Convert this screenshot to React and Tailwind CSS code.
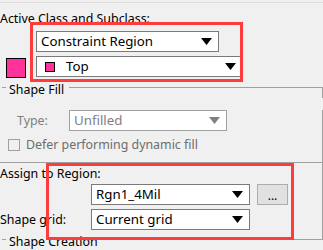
import React from "react";

// --- Combo arrow ---
const Arrow = ({ disabled }) => (
  <svg width="11" height="7" viewBox="0 0 11 7" className="shrink-0">
    <polygon points="0,0 11,0 5.5,7" fill={disabled ? "#808080" : "#000"} />
  </svg>
);

// --- Combo box ---
const Combo = ({ width, children, disabled, pr = "pr-[6px]" }) => (
  <div
    className={`flex h-[21px] shrink-0 items-center justify-between border bg-white pl-[4px] ${pr} ${
      disabled ? "border-[#a0a0a0] text-[#808080]" : "border-[#7a7a7a] text-black"
    }`}
    style={{ width }}
  >
    <div className="flex items-center text-[13.3px] leading-[19px]">{children}</div>
    <Arrow disabled={disabled} />
  </div>
);

// --- Group header (line with caption) ---
const GroupHeader = ({ title, corner }) => (
  <div className="flex h-[16px] items-start">
    <div className="ml-[2px] mt-[5px] h-px w-[4px] bg-[#a0a0a0]" />
    <span className="ml-[3px] mr-[5px] leading-[16px]">{title}</span>
    <div
      className={`mt-[5px] flex-1 border-t border-[#a0a0a0] ${
        corner ? "h-[11px] border-r" : ""
      }`}
    />
  </div>
);

const App = () => {
  return (
    <div className="relative h-[250px] w-[323px] overflow-hidden bg-[#f0f0f0] font-['Noto_Sans',sans-serif] text-[12.4px] text-black">
      <div className="mt-[2px] h-px bg-[#dcdcdc]" />

      {/* Active class */}
      <div className="mt-[8px] h-[16px] leading-[16px]">Active Class and Subclass:</div>
      <div className="mt-[4px] flex">
        <div className="ml-[6px] mt-[27px] h-[20px] w-[20px] border border-black bg-[#ff3399]" />
        <div className="ml-[10px] flex flex-col gap-[4px]">
          <Combo width={183}>Constraint Region</Combo>
          <Combo width={206} pr="pr-[5px]">
            <span className="ml-[4px] mr-[11px] h-[10px] w-[10px] border border-black bg-[#ff3399]" />
            Top
          </Combo>
        </div>
      </div>

      {/* Shape fill */}
      <div className="mt-[4px]">
        <GroupHeader title="Shape Fill" corner />
      </div>
      <div className="border-r border-[#a0a0a0]">
        <div className="mt-[12px] flex items-center text-[#808080]">
          <span className="ml-[17px] w-[52px] leading-[16px]">Type:</span>
          <Combo width={158} disabled>
            Unfilled
          </Combo>
        </div>
        <div className="mt-[6px] flex h-[16px] items-center text-[#6d6d6d]">
          <div className="ml-[8px] h-[12px] w-[12px] border border-[#a0a0a0] bg-[#f0f0f0]" />
          <span className="ml-[6px] leading-[16px]">Defer performing dynamic fill</span>
        </div>
        <div className="mt-[9px] h-px bg-[#a0a0a0]" />

        {/* Region */}
        <div className="mt-[3px] h-[16px] leading-[16px]">Assign to Region:</div>
        <div className="mt-[2px] flex items-center">
          <div className="ml-[91px]">
            <Combo width={159}>Rgn1_4Mil</Combo>
          </div>
          <button className="ml-[7px] flex h-[21px] w-[31px] items-end justify-center border border-[#adadad] bg-[#e1e1e1] pb-[2px] text-[12px] leading-[12px] text-black">
            ...
          </button>
        </div>
        <div className="mt-[4px] flex items-center">
          <span className="w-[91px] leading-[16px]">Shape grid:</span>
          <Combo width={159}>Current grid</Combo>
        </div>
        <div className="h-[9px]" />
      </div>

      {/* Shape creation */}
      <div className="-mt-[5px]">
        <GroupHeader title="Shape Creation" />
      </div>

      {/* Annotation boxes */}
      <div className="pointer-events-none absolute left-[30px] top-[22px] h-[60px] w-[213px] border-[3px] border-[#ff3c3c]" />
      <div className="pointer-events-none absolute left-[46px] top-[163px] h-[77px] w-[248px] border-[3px] border-[#ff3c3c]" />
    </div>
  );
};

export default App;
